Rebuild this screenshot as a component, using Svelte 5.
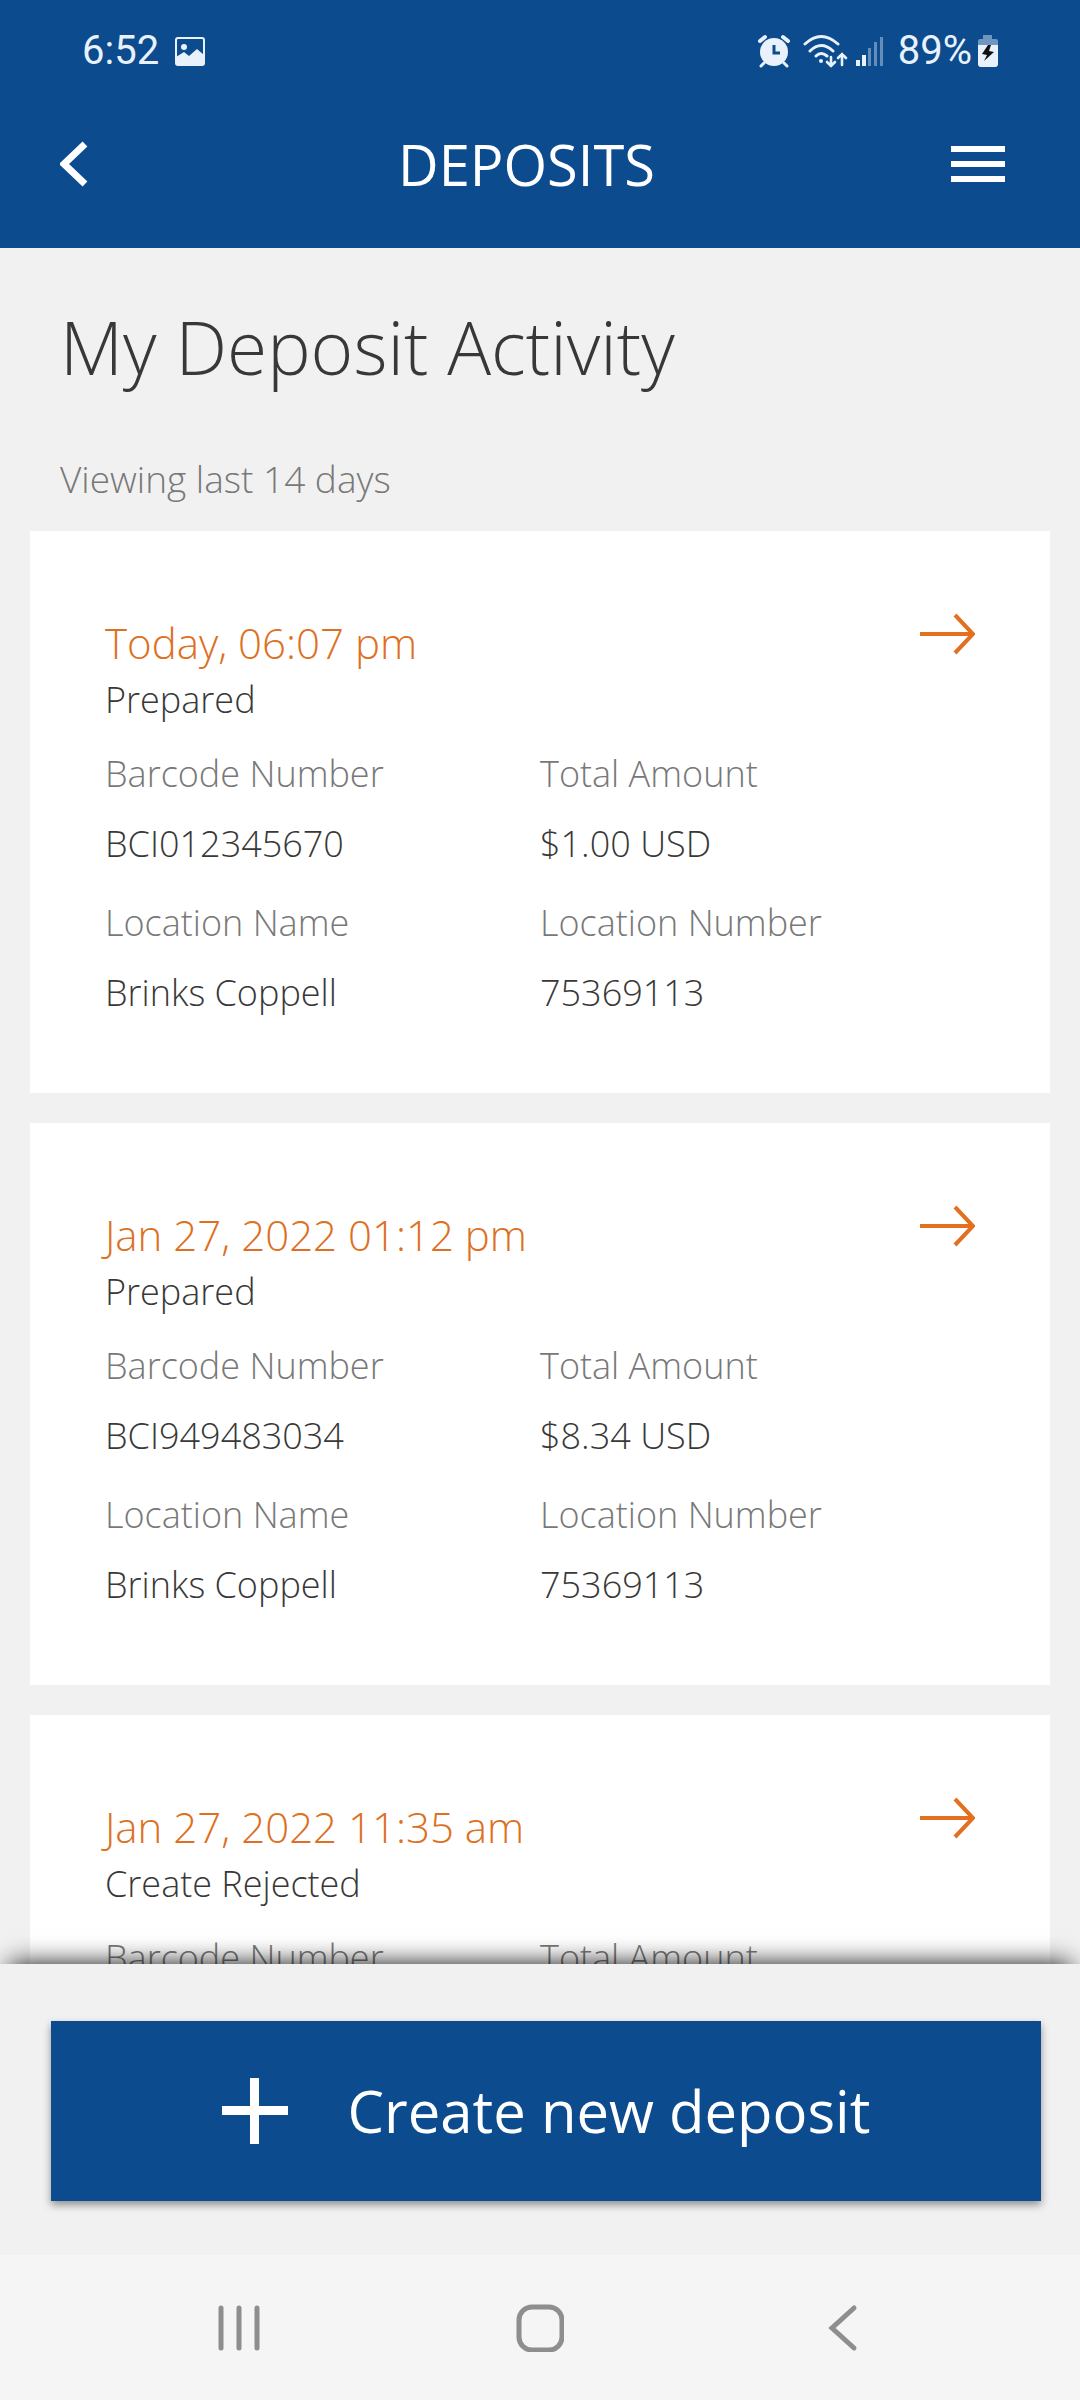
<script lang="ts">
	type Deposit = {
		date: string;
		status: string;
		barcode?: string;
		amount?: string;
		location?: string;
		locationNumber?: string;
	};

	let deposits: Deposit[] = [
		{
			date: "Today, 06:07 pm",
			status: "Prepared",
			barcode: "BCI012345670",
			amount: "$1.00 USD",
			location: "Brinks Coppell",
			locationNumber: "75369113",
		},
		{
			date: "Jan 27, 2022 01:12 pm",
			status: "Prepared",
			barcode: "BCI949483034",
			amount: "$8.34 USD",
			location: "Brinks Coppell",
			locationNumber: "75369113",
		},
		{
			date: "Jan 27, 2022 11:35 am",
			status: "Create Rejected",
		},
	];
</script>

<div class="app">
	<header>
		<div class="status">
			<span>6:52</span>
			<svg class="picture" width="30" height="29" viewBox="0 0 30 29">
				<rect x="1" y="1" width="28" height="27" rx="2" fill="none" stroke="currentColor" stroke-width="2" />
				<circle cx="9" cy="10" r="3" fill="currentColor" />
				<path d="M1 20 9 15l5 4 8-7 7 6v10H1z" fill="currentColor" />
			</svg>

			<svg class="alarm" width="34" height="34" viewBox="0 0 34 34">
				<g fill="none" stroke="currentColor" stroke-linecap="round">
					<path d="M3 7 8 3M31 7l-5-4" stroke-width="4" />
					<path d="m7 29-3 3M27 29l3 3" stroke-width="3" />
				</g>
				<circle cx="17" cy="18" r="14" fill="currentColor" />
				<path d="M17 11v8h6" fill="none" stroke="#0b4b8e" stroke-width="3" />
			</svg>
			<svg class="wifi" width="46" height="34" viewBox="0 0 46 34" fill="none" stroke="currentColor" stroke-width="3" stroke-linecap="round">
				<path d="M3 10Q19 -5 36 10M8 17q11-11 23 0M14 22q5-5 11 0" />
				<circle cx="19" cy="27" r="2" fill="currentColor" stroke="none" />
				<path d="M29 23v9m-4-4 4 4 4-4M40 31V20m-4 4 4-4 4 4" stroke-width="2.6" />
			</svg>
			<svg class="signal" width="28" height="30" viewBox="0 0 28 30" fill="currentColor">
				<path d="M0 24h4v6H0zM6 19h4v11H6z" />
				<path d="M12 12h3v18h-3zM18 6h3v24h-3zM24 1h3v29h-3z" opacity=".4" />
			</svg>
			<span class="percent">89%</span>
			<svg class="battery" width="20" height="32" viewBox="0 0 20 32">
				<path d="M5 0h9v4h4q2 0 2 2v4H0V6q0-2 2-2h3z" fill="currentColor" opacity=".45" />
				<path d="M0 10h20v19q0 3-3 3H3q-3 0-3-3z" fill="currentColor" />
				<path d="m10 10-6 9 5 1-3 6 10-9-5-1 2-6z" fill="#111" />
			</svg>
		</div>

		<div class="bar">
			<button class="back" aria-label="Back">
				<svg width="28" height="46" viewBox="0 0 28 46">
					<path d="M25 3 4 23l21 20" fill="none" stroke="currentColor" stroke-width="7" />
				</svg>
			</button>
			<h1>DEPOSITS</h1>
			<button aria-label="Menu">
				<svg width="54" height="36" viewBox="0 0 54 36" fill="currentColor">
					<path d="M0 0h54v6H0zM0 15h54v6H0zM0 30h54v6H0z" />
				</svg>
			</button>
		</div>
	</header>

	<main>
		<h2>My Deposit Activity</h2>
		<p class="range">Viewing last 14 days</p>

		<ul>
			{#each deposits as deposit}
				<li class="card">
					<div class="top">
						<div>
							<h3>{deposit.date}</h3>
							<p>{deposit.status}</p>
						</div>
						<button class="arrow" aria-label="Open deposit">
							<svg width="55" height="44" viewBox="0 0 55 44">
								<path d="M0 21h53M35 2l18 19-18 19" fill="none" stroke="currentColor" stroke-width="4" />
							</svg>
						</button>
					</div>
					<dl>
						<div>
							<dt>Barcode Number</dt>
							<dd>{deposit.barcode ?? ""}</dd>
						</div>
						<div>
							<dt>Total Amount</dt>
							<dd>{deposit.amount ?? ""}</dd>
						</div>
						{#if deposit.location}
							<div>
								<dt>Location Name</dt>
								<dd>{deposit.location}</dd>
							</div>
							<div>
								<dt>Location Number</dt>
								<dd>{deposit.locationNumber}</dd>
							</div>
						{/if}
					</dl>
				</li>
			{/each}
		</ul>
	</main>

	<footer>
		<button class="create">
			<svg width="66" height="66" viewBox="0 0 66 66" fill="currentColor">
				<path d="M28 0h9v66h-9z" />
				<path d="M0 28h66v9H0z" />
			</svg>
			Create new deposit
		</button>
	</footer>

	<nav>
		<button aria-label="Recent apps">
			<svg width="48" height="48" viewBox="0 0 48 48" fill="none" stroke="currentColor" stroke-width="5" stroke-linecap="round">
				<path d="M6 4v40M24 4v40M42 4v40" />
			</svg>
		</button>
		<button aria-label="Home">
			<svg width="48" height="48" viewBox="0 0 48 48">
				<rect x="3" y="3" width="43" height="43" rx="13" fill="none" stroke="currentColor" stroke-width="5" />
			</svg>
		</button>
		<button aria-label="Back">
			<svg width="48" height="48" viewBox="0 0 48 48">
				<path d="M37 4 15 24l22 20" fill="none" stroke="currentColor" stroke-width="5" stroke-linecap="round" />
			</svg>
		</button>
	</nav>
</div>

<style>
	:global(body) {
		margin: 0;
	}

	.app {
		--blue: #0b4b8e;
		--orange: #dd7022;
		--text: #383838;
		--muted: #787878;

		display: flex;
		flex-direction: column;
		height: 100vh;
		font-family: "Open Sans", "Noto Sans", sans-serif;
		font-size: 36px;
		font-weight: 300;
		line-height: 54px;
		color: var(--text);
		background: #f1f1f1;
	}

	h1,
	h2,
	h3,
	p,
	ul,
	dl,
	dd {
		margin: 0;
		padding: 0;
		font-weight: 300;
	}

	button {
		display: flex;
		align-items: center;
		padding: 0;
		border: 0;
		font: inherit;
		color: inherit;
		background: none;
		cursor: pointer;
	}

	svg {
		flex: none;
		display: block;
	}

	header {
		color: #fff;
		background: var(--blue);
	}

	.status {
		display: flex;
		align-items: center;
		box-sizing: border-box;
		height: 80px;
		padding: 22px 82px 0;
		font-family: Roboto, sans-serif;
		font-size: 40px;
		font-weight: 400;
		color: #e9f2fc;
	}

	.picture {
		margin-left: 16px;
	}

	.alarm {
		margin-left: auto;
	}

	.wifi {
		margin-left: 11px;
	}

	.signal {
		margin-left: 8px;
	}

	.percent {
		margin-left: 14px;
	}

	.battery {
		margin-left: 6px;
	}

	.bar {
		display: flex;
		align-items: center;
		height: 168px;
		padding: 0 75px 0 60px;
	}

	.back {
		width: 42px;
	}

	h1 {
		flex: 1;
		font-size: 56px;
		font-weight: 400;
		text-align: center;
	}

	main {
		flex: 1;
		min-height: 0;
		padding: 51px 30px 0;
		overflow: hidden auto;
		scrollbar-width: none;
	}

	h2 {
		margin: 0 30px;
		font-size: 73px;
		line-height: 96px;
	}

	.range {
		margin: 57px 30px 25px;
		font-size: 37px;
		color: var(--muted);
	}

	ul {
		display: grid;
		gap: 30px;
		list-style: none;
	}

	.card {
		padding: 82px 75px 73px;
		background: #fff;
	}

	.top {
		display: flex;
		justify-content: space-between;
		align-items: flex-start;
	}

	h3 {
		font-size: 42px;
		line-height: 60px;
		color: var(--orange);
	}

	.arrow {
		color: #e2701f;
	}

	dl {
		display: grid;
		grid-template-columns: 1fr 1fr;
		row-gap: 25px;
		margin-top: 20px;
	}

	dt {
		margin-bottom: 16px;
		color: var(--muted);
	}

	footer {
		position: relative;
		padding: 57px 39px 54px 51px;
		background: #f1f1f1;
		box-shadow: 0 -10px 24px -10px rgba(0, 0, 0, 0.95);
	}

	.create {
		justify-content: center;
		gap: 60px;
		width: 100%;
		height: 180px;
		font-size: 58px;
		font-weight: 400;
		color: #fff;
		background: var(--blue);
		box-shadow: 0 4px 8px rgba(0, 0, 0, 0.4);
	}

	nav {
		position: relative;
		display: grid;
		grid-template-columns: repeat(3, 1fr);
		height: 145px;
		padding: 0 88px;
		background: #f5f5f5;
		color: #8e8e8e;
	}

	nav button {
		justify-content: center;
	}
</style>
